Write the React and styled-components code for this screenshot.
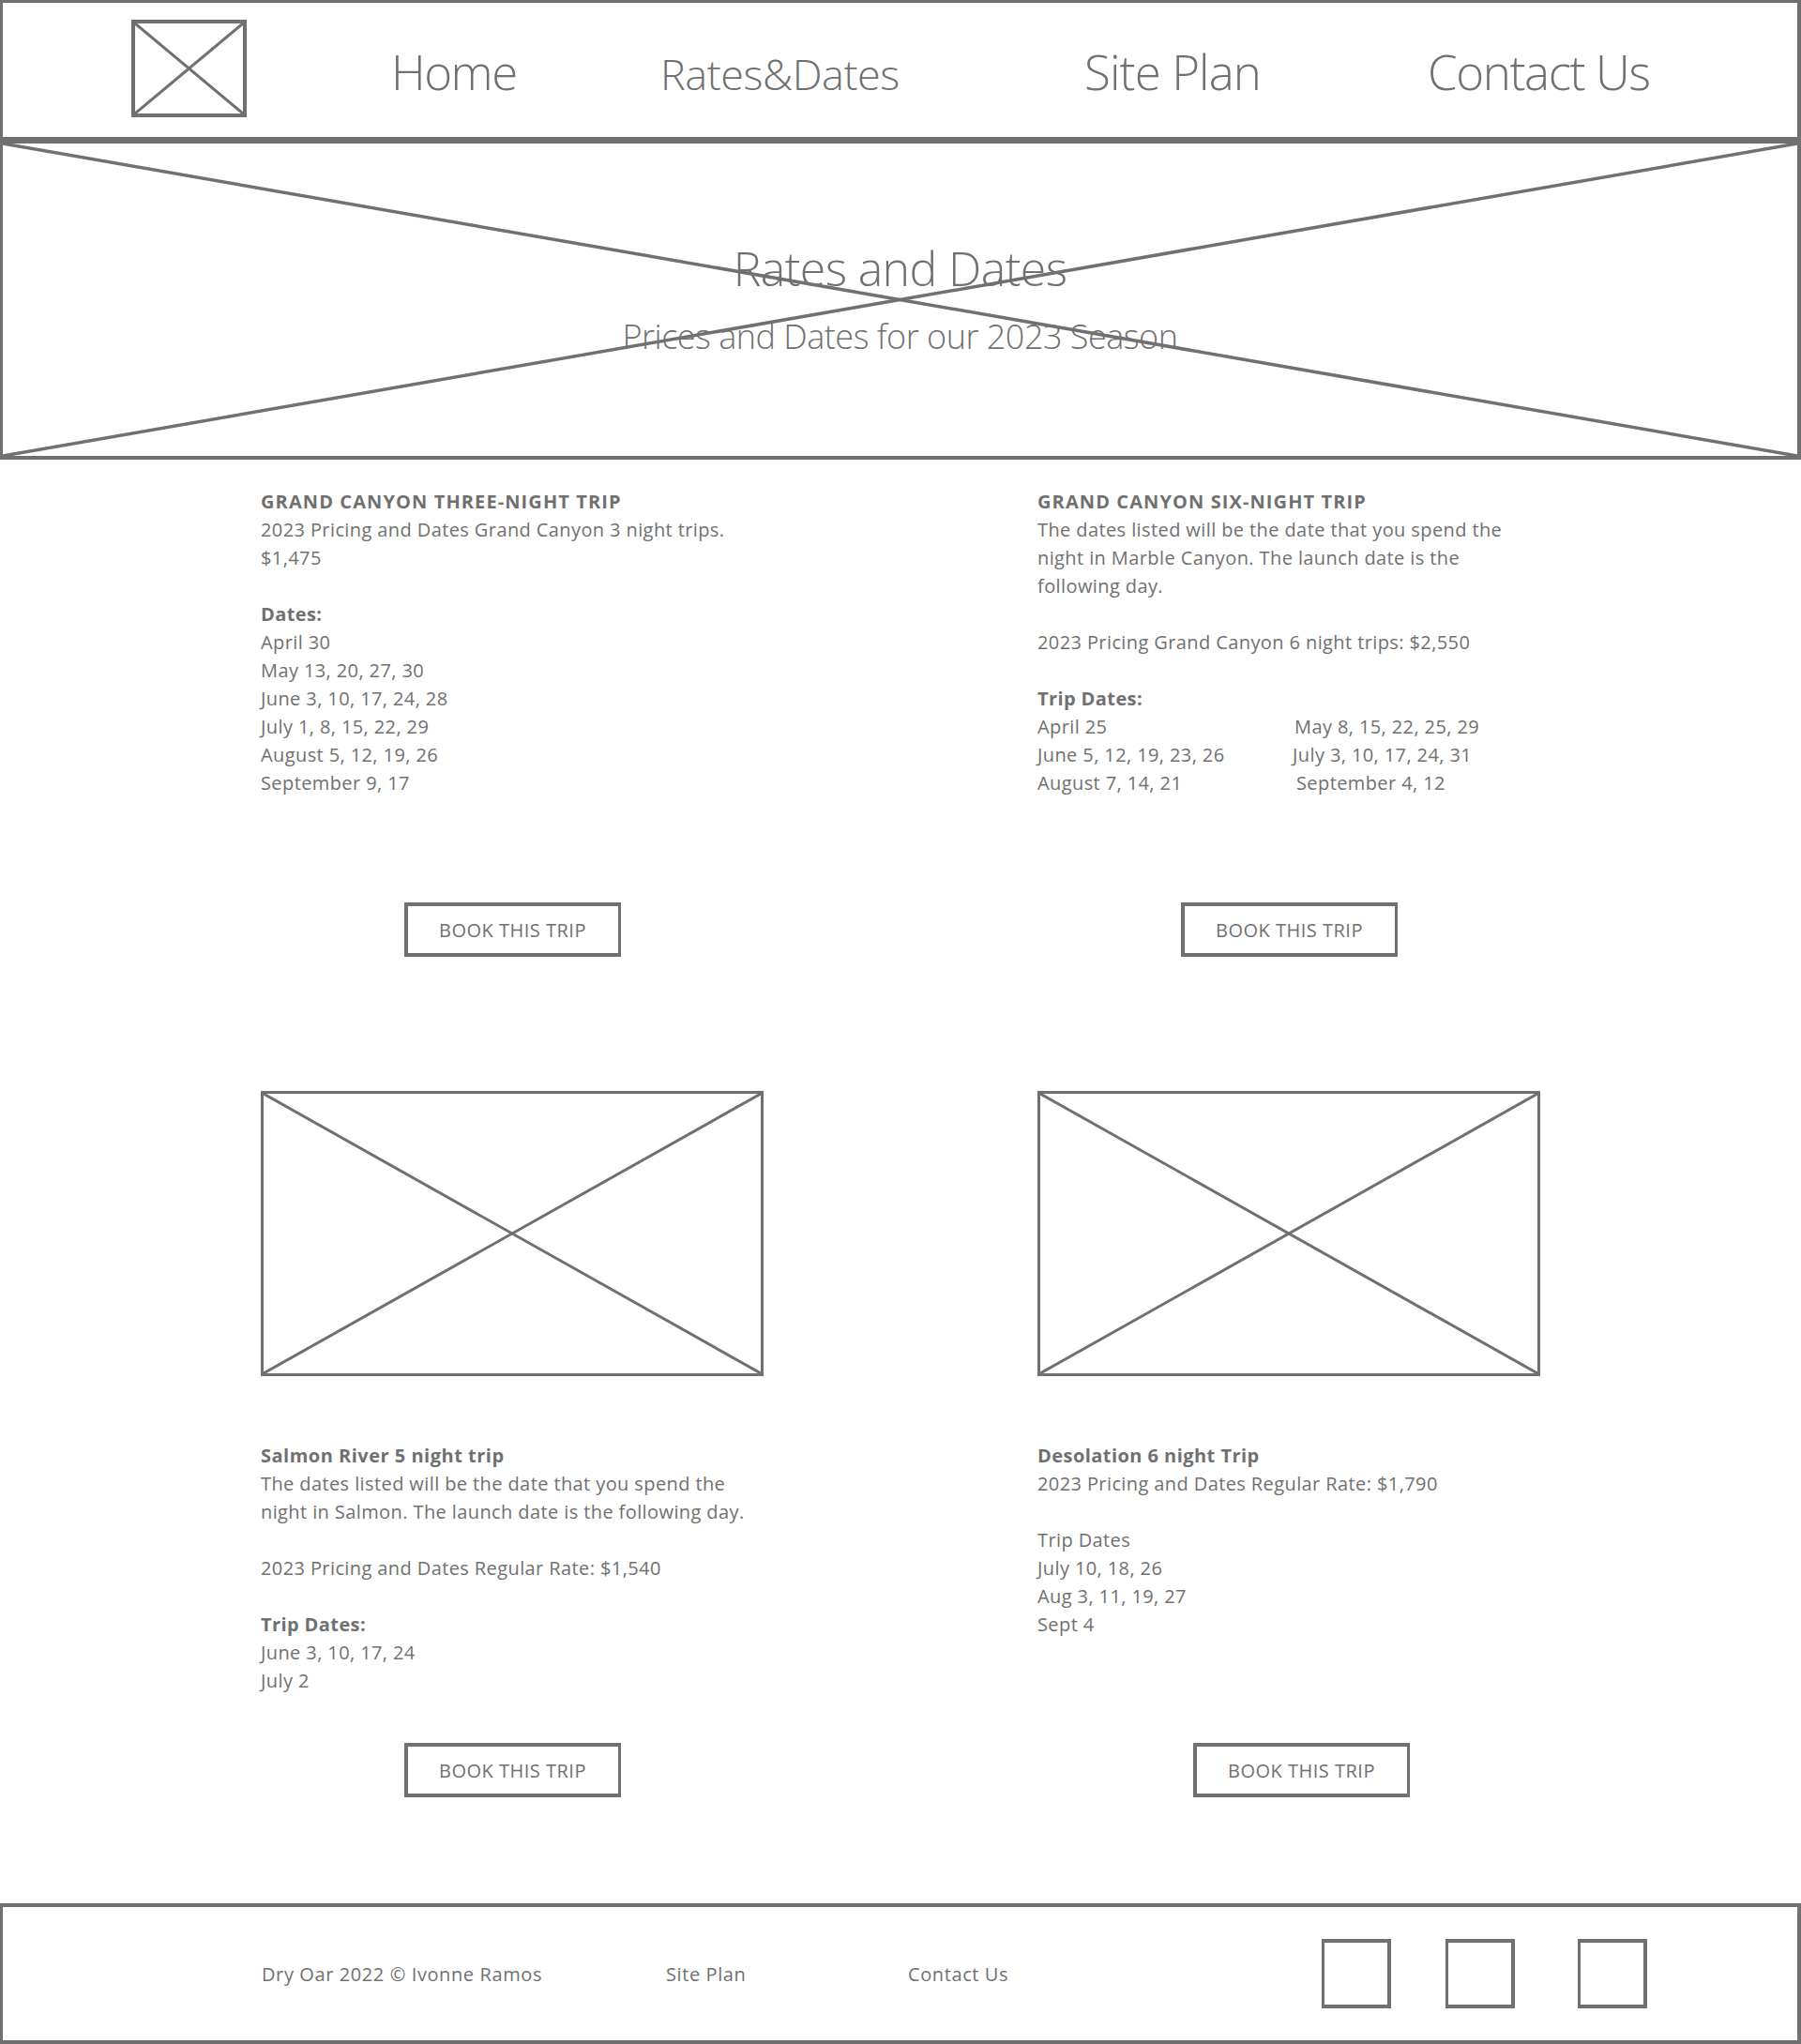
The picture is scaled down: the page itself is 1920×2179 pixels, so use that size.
import React from "react";
import styled, { createGlobalStyle } from "styled-components";

const INK = "#707070";

const GlobalStyle = createGlobalStyle`
  html, body { margin: 0; padding: 0; background: #ffffff; }
  body { font-family: "Open Sans", "Noto Sans", sans-serif; color: ${INK}; }
  * { box-sizing: border-box; }
`;

const Page = styled.div`
  width: 1920px;
  min-height: 2179px;
  display: flex;
  flex-direction: column;
`;

/* ---------- Placeholder cross drawing ---------- */
const CrossSvg = styled.svg`
  position: absolute;
  inset: 0;
  width: 100%;
  height: 100%;
  pointer-events: none;
`;

function Cross({ stroke = 3.5 }) {
  return (
    <CrossSvg viewBox="0 0 100 100" preserveAspectRatio="none" aria-hidden="true">
      <line x1="0" y1="0" x2="100" y2="100" stroke={INK} strokeWidth={stroke} vectorEffect="non-scaling-stroke" />
      <line x1="0" y1="100" x2="100" y2="0" stroke={INK} strokeWidth={stroke} vectorEffect="non-scaling-stroke" />
    </CrossSvg>
  );
}

/* ---------- Header ---------- */
const Header = styled.header`
  height: 150px;
  border: solid ${INK};
  border-width: 3px 4px 4px 3px;
  display: flex;
  align-items: flex-start;
  padding-left: 137px;
`;

const Logo = styled.div`
  position: relative;
  width: 123px;
  height: 104px;
  margin-top: 18px;
  border: 4px solid ${INK};
`;

const Nav = styled.nav`
  display: grid;
  grid-template-columns: 287px 452px 366px auto;
  align-items: baseline;
  margin-left: 154px;
  margin-top: 48px;
`;

const NavLink = styled.a`
  font-size: ${(p) => p.$size}px;
  line-height: 1;
  font-weight: 300;
  color: ${INK};
  text-decoration: none;
  letter-spacing: ${(p) => p.$ls || 0}px;
  white-space: nowrap;
`;

/* ---------- Hero ---------- */
const Hero = styled.section`
  position: relative;
  height: 340px;
  border: solid ${INK};
  border-width: 3px 4px 4px 3px;
  display: flex;
  flex-direction: column;
  align-items: center;
  padding-top: 103px;
  gap: 21px;
`;

const HeroTitle = styled.h1`
  position: relative;
  margin: 0;
  font-size: 50px;
  line-height: 60px;
  font-weight: 300;
  letter-spacing: -0.6px;
`;

const HeroSub = styled.p`
  position: relative;
  margin: 0;
  font-size: 36px;
  line-height: 43px;
  font-weight: 300;
  letter-spacing: -0.5px;
`;

/* ---------- Content ---------- */
const Main = styled.main`
  width: 1364px;
  margin: 0 auto;
  padding-top: 30px;
  display: flex;
  flex-direction: column;
`;

const Row = styled.div`
  display: grid;
  grid-template-columns: 536px 536px;
  column-gap: 292px;
  margin-top: ${(p) => p.$top || 0}px;
`;

const Card = styled.article`
  display: flex;
  flex-direction: column;
`;

const Photo = styled.div`
  position: relative;
  width: 536px;
  height: 304px;
  border: 3px solid ${INK};
  margin-bottom: 70px;
`;

const TextBlock = styled.div`
  font-size: 20px;
  line-height: 30px;
  letter-spacing: 0.4px;
  white-space: nowrap;
`;

const Title = styled.h2`
  margin: 0;
  font-size: 20px;
  line-height: 30px;
  font-weight: 700;
  letter-spacing: ${(p) => p.$ls ?? 1.1}px;
`;

const Para = styled.p`
  margin: 0 0 30px;
`;

const Label = styled.div`
  font-weight: ${(p) => (p.$plain ? 400 : 700)};
`;

const Line = styled.div``;

const DateGrid = styled.div`
  display: grid;
  grid-template-columns: 272px auto;
`;

const DateCell = styled.div`
  padding-left: ${(p) => p.$nudge || 0}px;
`;

const BookButton = styled.button`
  align-self: center;
  width: 231px;
  height: 58px;
  margin-top: ${(p) => (p.$auto ? "auto" : `${p.$top}px`)};
  transform: translateX(${(p) => p.$shift || 0}px);
  border: 4px solid ${INK};
  border-right-width: 3px;
  background: #ffffff;
  color: ${INK};
  font-family: "Open Sans", "Noto Sans", sans-serif;
  font-size: 20px;
  font-weight: 400;
  letter-spacing: 0.5px;
  padding: 0;
  cursor: pointer;
`;

const Spacer = styled.div`
  height: ${(p) => p.$h}px;
`;

/* ---------- Footer ---------- */
const Footer = styled.footer`
  height: 150px;
  border: solid ${INK};
  border-width: 4px 4px 4px 3px;
  display: grid;
  grid-template-columns: 431px 258px 441px auto;
  align-items: center;
  padding-left: 276px;
`;

const FooterText = styled.span`
  font-size: 20px;
  font-weight: 400;
  letter-spacing: 0.6px;
  white-space: nowrap;
`;

const Socials = styled.div`
  display: flex;
  align-items: center;
`;

const Social = styled.a`
  width: 74px;
  height: 74px;
  border: 4px solid ${INK};
  border-left-width: 3px;
  margin-left: ${(p) => p.$gap || 0}px;
`;

export default function App() {
  return (
    <Page>
      <GlobalStyle />
      <Header>
        <Logo>
          <Cross stroke={3} />
        </Logo>
        <Nav>
          <NavLink href="#" $size={51} $ls={-1.5}>Home</NavLink>
          <NavLink href="#" $size={45} $ls={-0.45}>Rates&amp;Dates</NavLink>
          <NavLink href="#" $size={51} $ls={-0.9}>Site Plan</NavLink>
          <NavLink href="#" $size={51} $ls={-1.4}>Contact Us</NavLink>
        </Nav>
      </Header>

      <Hero>
        <Cross stroke={3.5} />
        <HeroTitle>Rates and Dates</HeroTitle>
        <HeroSub>Prices and Dates for our 2023 Season</HeroSub>
      </Hero>

      <Main>
        <Row>
          <Card>
            <TextBlock>
              <Title>GRAND CANYON THREE-NIGHT TRIP</Title>
              <Para>
                2023 Pricing and Dates Grand Canyon 3 night trips.
                <br />
                $1,475
              </Para>
              <Label>Dates:</Label>
              <Line>April 30</Line>
              <Line>May 13, 20, 27, 30</Line>
              <Line>June 3, 10, 17, 24, 28</Line>
              <Line>July 1, 8, 15, 22, 29</Line>
              <Line>August 5, 12, 19, 26</Line>
              <Line>September 9, 17</Line>
            </TextBlock>
            <BookButton $top={112}>BOOK THIS TRIP</BookButton>
          </Card>
          <Card>
            <TextBlock>
              <Title>GRAND CANYON SIX-NIGHT TRIP</Title>
              <Para>
                The dates listed will be the date that you spend the
                <br />
                night in Marble Canyon. The launch date is the
                <br />
                following day.
              </Para>
              <Para>2023 Pricing Grand Canyon 6 night trips: $2,550</Para>
              <Label>Trip Dates:</Label>
              <DateGrid>
                <DateCell>April 25</DateCell>
                <DateCell $nudge={2}>May 8, 15, 22, 25, 29</DateCell>
                <DateCell>June 5, 12, 19, 23, 26</DateCell>
                <DateCell>July 3, 10, 17, 24, 31</DateCell>
                <DateCell>August 7, 14, 21</DateCell>
                <DateCell $nudge={4}>September 4, 12</DateCell>
              </DateGrid>
            </TextBlock>
            <BookButton $top={112}>BOOK THIS TRIP</BookButton>
          </Card>
        </Row>

        <Row $top={143}>
          <Card>
            <Photo>
              <Cross stroke={3} />
            </Photo>
            <TextBlock>
              <Title $ls={0.5}>Salmon River 5 night trip</Title>
              <Para>
                The dates listed will be the date that you spend the
                <br />
                night in Salmon. The launch date is the following day.
              </Para>
              <Para>2023 Pricing and Dates Regular Rate: $1,540</Para>
              <Label>Trip Dates:</Label>
              <Line>June 3, 10, 17, 24</Line>
              <Line>July 2</Line>
            </TextBlock>
            <BookButton $top={51}>BOOK THIS TRIP</BookButton>
          </Card>
          <Card>
            <Photo>
              <Cross stroke={3} />
            </Photo>
            <TextBlock>
              <Title $ls={0.45}>Desolation 6 night Trip</Title>
              <Para>2023 Pricing and Dates Regular Rate: $1,790</Para>
              <Label $plain>Trip Dates</Label>
              <Line>July 10, 18, 26</Line>
              <Line>Aug 3, 11, 19, 27</Line>
              <Line>Sept 4</Line>
            </TextBlock>
            <BookButton $auto $shift={13}>BOOK THIS TRIP</BookButton>
          </Card>
        </Row>
        <Spacer $h={113} />
      </Main>

      <Footer>
        <FooterText>Dry Oar 2022 © Ivonne Ramos</FooterText>
        <FooterText>Site Plan</FooterText>
        <FooterText>Contact Us</FooterText>
        <Socials>
          <Social href="#" aria-label="social 1" />
          <Social href="#" aria-label="social 2" $gap={58} />
          <Social href="#" aria-label="social 3" $gap={67} />
        </Socials>
      </Footer>
    </Page>
  );
}
